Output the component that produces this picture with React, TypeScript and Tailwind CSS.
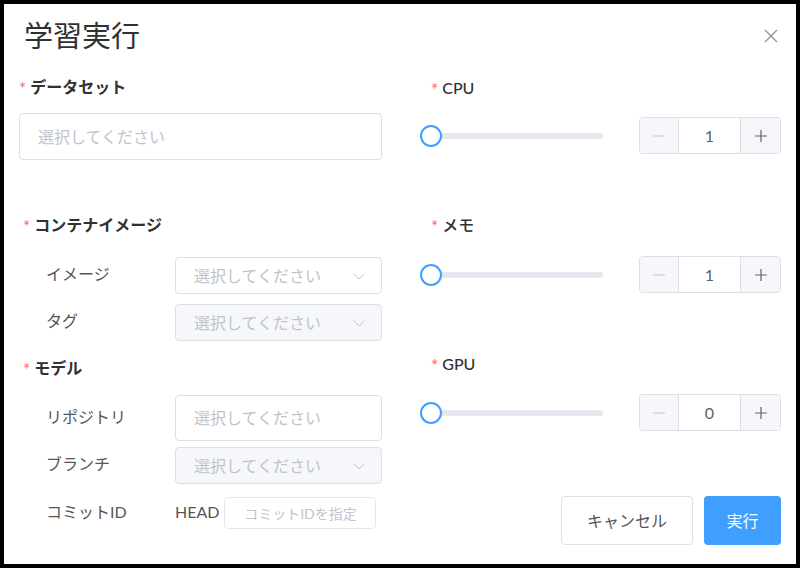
import React from "react";

const font = { fontFamily: '"Lato", "Noto Sans CJK JP", sans-serif' };

function Chevron() {
  return (
    <svg width="14" height="14" viewBox="0 0 14 14" fill="none" className="text-[#c0c4cc]">
      <path d="M1.5 4.5l5.5 5.5 5.5-5.5" stroke="currentColor" strokeWidth="1" />
    </svg>
  );
}

function Label({ text, indent, bold = true }: { text: string; indent?: string; bold?: boolean }) {
  return (
    <div className={`flex h-6 items-center ${indent ?? ""}`}>
      <span className="mr-[4px] mt-[2px] text-[17px] leading-none text-[#f56c6c]">*</span>
      <span className={`text-[16px] text-[#303133] ${bold ? "font-bold" : "font-medium"}`}>{text}</span>
    </div>
  );
}

function SelectBox({ disabled, arrow = true, h = "h-[37px]" }: { disabled?: boolean; arrow?: boolean; h?: string }) {
  return (
    <div
      className={`flex flex-1 items-center justify-between rounded-[4px] border border-[#dcdfe6] pl-[18px] pr-[15px] ${h} ${
        disabled ? "bg-[#f5f7fa]" : "bg-white"
      }`}
    >
      <span className="text-[16px] text-[#bfc3cb]">選択してください</span>
      {arrow && <Chevron />}
    </div>
  );
}

function SubRow({ label, children, mt, h }: { label: string; children: React.ReactNode; mt: string; h: string }) {
  return (
    <div className={`flex items-center pl-[27px] ${mt} ${h}`}>
      <span className="-mt-[3px] w-[129px] text-[16px] text-[#555]">{label}</span>
      {children}
    </div>
  );
}

function SliderRow({ value, mt }: { value: number; mt: string }) {
  return (
    <div className={`flex h-[37px] items-center justify-between ${mt}`}>
      <div className="relative h-[22px] w-[183px]">
        <div className="absolute left-[10px] right-0 top-[8px] h-[6px] rounded-full bg-[#e4e7ed]" />
        <div className="absolute left-0 top-0 h-[22px] w-[22px] rounded-full border-2 border-[#409eff] bg-white" />
      </div>
      <div className="flex h-[37px] w-[142px] overflow-hidden rounded-[4px] border border-[#dcdfe6]">
        <div className="flex w-[39px] items-center justify-center border-r border-[#dcdfe6] bg-[#f5f7fa]">
          <svg width="14" height="14" viewBox="0 0 14 14">
            <path d="M1 7h12" stroke="#c0c4cc" strokeWidth="1.2" />
          </svg>
        </div>
        <div className="flex flex-1 items-center justify-center bg-white text-[16px] text-[#606266]">{value}</div>
        <div className="flex w-[40px] items-center justify-center border-l border-[#dcdfe6] bg-[#f5f7fa]">
          <svg width="14" height="14" viewBox="0 0 14 14">
            <path d="M1 7h12M7 1v12" stroke="#606266" strokeWidth="1.2" />
          </svg>
        </div>
      </div>
    </div>
  );
}

export default function App() {
  return (
    <div className="h-[568px] w-[800px] bg-black p-1" style={font}>
      <div className="h-[560px] w-[792px] bg-white px-[15px] pt-[12px]">
        <div className="flex h-[40px] items-center justify-between">
          <h1 className="pl-[5px] text-[29px] font-normal text-[#303133]">学習実行</h1>
          <svg width="14" height="14" viewBox="0 0 14 14" className="mr-[3px] text-[#909399]">
            <path d="M1 1l12 12M13 1L1 13" stroke="currentColor" strokeWidth="1.3" />
          </svg>
        </div>

        <div className="flex gap-[38px]">
          {/* left column */}
          <div className="flex w-[363px] flex-col">
            <div className="mt-[19px]">
              <Label text="データセット" />
            </div>
            <div className="mt-[14px] flex">
              <SelectBox arrow={false} h="h-[47px]" />
            </div>
            <div className="mt-[53px]">
              <Label text="コンテナイメージ" indent="pl-[4px]" />
            </div>
            <SubRow label="イメージ" mt="mt-[20px]" h="h-[37px]">
              <SelectBox />
            </SubRow>
            <SubRow label="タグ" mt="mt-[10px]" h="h-[37px]">
              <SelectBox disabled />
            </SubRow>
            <div className="mt-[15px]">
              <Label text="モデル" indent="pl-[4px]" />
            </div>
            <SubRow label="リポジトリ" mt="mt-[15px]" h="h-[46px]">
              <SelectBox arrow={false} h="h-[46px]" />
            </SubRow>
            <SubRow label="ブランチ" mt="mt-[6px]" h="h-[37px]">
              <SelectBox disabled />
            </SubRow>
            <SubRow label="コミットID" mt="mt-[13px]" h="h-[32px]">
              <span className="-mt-[3px] mr-[5px] text-[16px] text-[#555]">HEAD</span>
              <div className="flex h-[32px] w-[152px] items-center justify-center rounded-[4px] border border-[#e4e7ed] bg-white text-[14px] text-[#c0c4cc]">
                コミットIDを指定
              </div>
            </SubRow>
          </div>

          {/* right column */}
          <div className="flex w-[361px] flex-col">
            <div className="mt-[20px]">
              <Label text="CPU" indent="pl-[11px]" bold={false} />
            </div>
            <SliderRow value={1} mt="mt-[17px]" />
            <div className="mt-[59px]">
              <Label text="メモ" indent="pl-[11px]" bold={false} />
            </div>
            <SliderRow value={1} mt="mt-[19px]" />
            <div className="mt-[59px]">
              <Label text="GPU" indent="pl-[11px]" bold={false} />
            </div>
            <SliderRow value={0} mt="mt-[18px]" />
            <div className="mt-[65px] flex justify-end gap-[11px]">
              <button className="h-[49px] w-[132px] rounded-[4px] border border-[#dcdfe6] bg-white text-[16px] text-[#555]">
                キャンセル
              </button>
              <button className="h-[49px] w-[77px] rounded-[4px] bg-[#409eff] text-[16px] text-white">実行</button>
            </div>
          </div>
        </div>
      </div>
    </div>
  );
}
